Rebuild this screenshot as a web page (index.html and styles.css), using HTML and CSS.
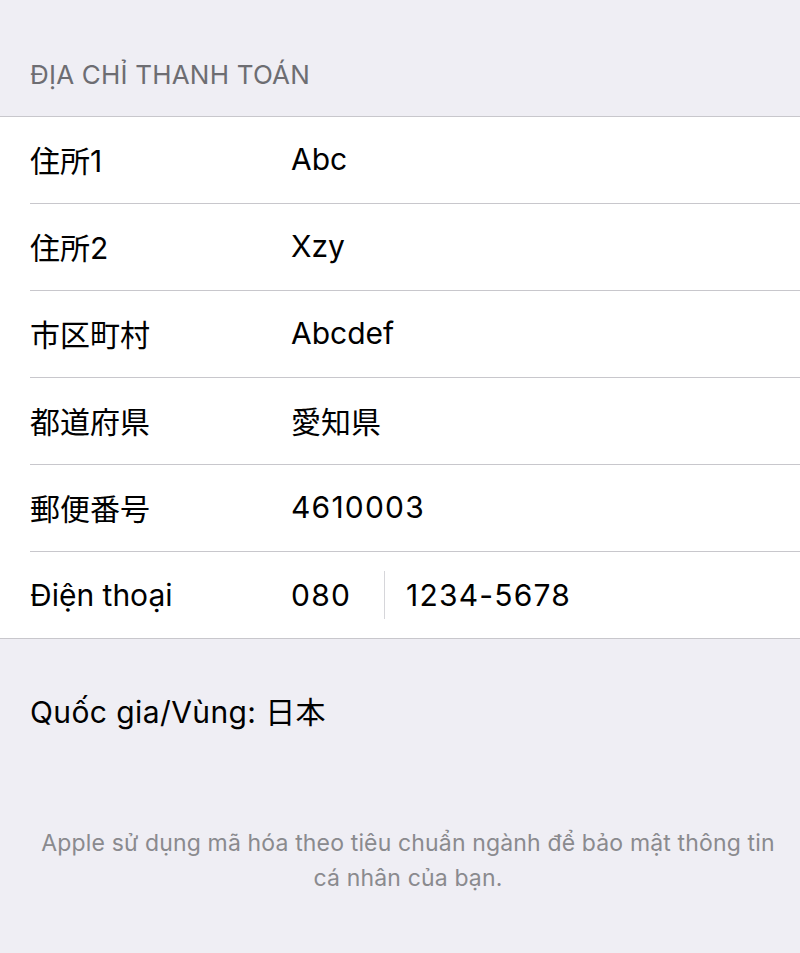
FILE: index.html
```html
<!DOCTYPE html>
<html lang="vi">
<head>
<meta charset="utf-8">
<link rel="stylesheet" href="styles.css">
</head>
<body>
<div class="page">
  <div class="section-header">ĐỊA CHỈ THANH TOÁN</div>
  <div class="group">
    <div class="row"><div class="label">住所1</div><div class="value">Abc</div></div>
    <div class="row"><div class="label">住所2</div><div class="value">Xzy</div></div>
    <div class="row"><div class="label">市区町村</div><div class="value">Abcdef</div></div>
    <div class="row"><div class="label">都道府県</div><div class="value">愛知県</div></div>
    <div class="row"><div class="label">郵便番号</div><div class="value num">4610003</div></div>
    <div class="row last"><div class="label">Điện thoại</div><div class="value phone"><span class="area num">080</span><span class="divider"></span><span class="number num">1234-5678</span></div></div>
  </div>
  <div class="country">Quốc gia/Vùng: 日本</div>
  <div class="footer">Apple sử dụng mã hóa theo tiêu chuẩn ngành để bảo mật thông tin cá nhân của bạn.</div>
</div>
</body>
</html>
```
FILE: styles.css
```css
html, body {
  margin: 0;
  padding: 0;
  background: #efeef4;
}
.page {
  width: 800px;
  height: 953px;
  font-family: Inter, "Noto Sans CJK JP", sans-serif;
  color: #000;
  overflow: hidden;
}
.section-header {
  height: 116px;
  box-sizing: border-box;
  padding: 59px 0 0 30px;
  font-size: 26px;
  line-height: 32px;
  color: #6d6d72;
  letter-spacing: 0.2px;
}
.group {
  background: #fff;
  border-top: 1px solid #c8c7cc;
  border-bottom: 1px solid #c8c7cc;
}
.row {
  height: 87px;
  box-sizing: border-box;
  margin-left: 30px;
  border-bottom: 1px solid #c8c7cc;
  display: flex;
  align-items: center;
  font-size: 30px;
  padding-bottom: 2px;
}
.row.last {
  border-bottom: none;
  height: 86px;
  padding-bottom: 0;
}
.label {
  width: 261px;
  flex: none;
}
.value {
  flex: 1;
}
.num {
  letter-spacing: 1.2px;
}
.phone {
  display: flex;
  align-items: center;
}
.area {
  width: 93px;
}
.divider {
  width: 1px;
  height: 48px;
  background: #d6d6da;
  margin-right: 21px;
}
.country {
  padding: 53px 0 0 30px;
  font-size: 30px;
  line-height: 40px;
  letter-spacing: 0.4px;
}
.footer {
  margin: 94px 0 0 38px;
  width: 740px;
  text-align: center;
  font-size: 23px;
  line-height: 35px;
  letter-spacing: 0.15px;
  color: #8a8a8e;
}
```
